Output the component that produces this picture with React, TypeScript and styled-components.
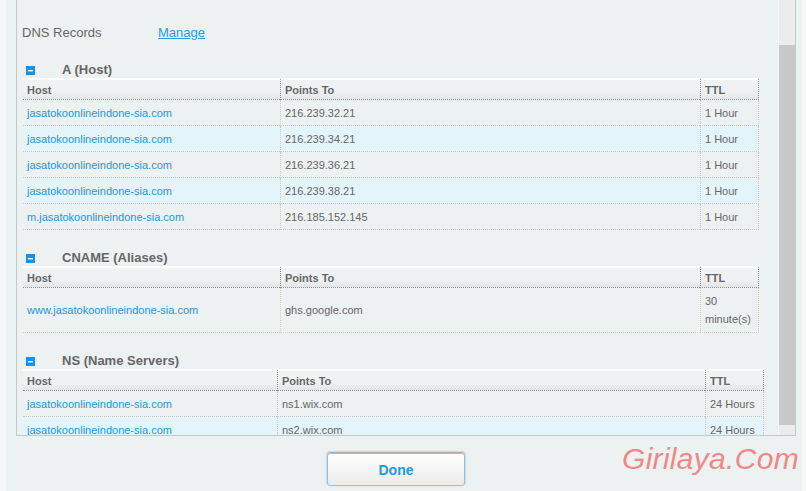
import React from "react";
import styled, { createGlobalStyle } from "styled-components";

const Global = createGlobalStyle`
  html, body { margin: 0; padding: 0; background: #f6f8f8; }
  body { font-family: "Liberation Sans", Arial, sans-serif; }
  * { box-sizing: border-box; }
`;

const Panel = styled.div`
  margin-left: 6px;
  width: 796px;
  height: 491px;
  background: #ecf1f1;
  padding-left: 10px;
  display: flex;
  flex-direction: column;
  overflow: hidden;
`;

const ScrollBox = styled.div`
  width: 780px;
  height: 436px;
  border: 1px solid #c4c8c8;
  border-top: none;
  display: flex;
`;

const Content = styled.div`
  flex: 1;
  padding: 24px 0 0 0;
  overflow: hidden;
`;

const ScrollBar = styled.div`
  width: 17px;
  border-left: 1px solid #f6f6f6;
  background: #ececec;
  padding: 45px 0 10px;
  display: flex;
`;

const Thumb = styled.div`
  flex: 1;
  background: #c8c8c8;
`;

const TitleRow = styled.div`
  display: flex;
  align-items: center;
  height: 16px;
  padding-left: 5px;
  font-size: 13px;
  color: #666;
`;

const Title = styled.span`
  width: 136px;
`;

const ManageLink = styled.a`
  color: #1f9ee6;
  text-decoration: underline;
  cursor: pointer;
`;

const Section = styled.div<{ $top: number }>`
  margin-top: ${(p) => p.$top}px;
`;

const SectionHead = styled.div`
  display: flex;
  align-items: center;
  height: 18px;
  padding-left: 9px;
  font-size: 13px;
  font-weight: bold;
  color: #666;
`;

const Toggle = styled.svg`
  width: 9px;
  height: 9px;
  margin-top: 2px;
  margin-right: 27px;
  flex: none;
`;

const Table = styled.div<{ $cols: string }>`
  margin-left: 6px;
  display: grid;
  grid-template-columns: ${(p) => p.$cols};
  font-size: 11px;
`;

const HeadCell = styled.div<{ $sep?: boolean; $end?: boolean }>`
  height: 22px;
  border-top: 2px solid #fff;
  border-bottom: 1px dotted #8a8a8a;
  border-left: ${(p) => (p.$sep ? "1px dotted #8a8a8a" : "none")};
  border-right: ${(p) => (p.$end ? "1px dotted #8a8a8a" : "none")};
  background: linear-gradient(#eef2f2 0%, #eef2f2 65%, #e1e5e5 100%);
  padding-left: 4px;
  display: flex;
  align-items: center;
  font-weight: bold;
  color: #666;
`;

const Cell = styled.div<{ $alt?: boolean; $sep?: boolean; $end?: boolean; $tall?: boolean; $tan?: boolean }>`
  min-height: ${(p) => (p.$tall ? 45 : 26)}px;
  border-bottom: 1px dotted ${(p) => (p.$tan ? "#d8ccb2" : "#c9c9c9")};
  border-left: ${(p) => (p.$sep ? `1px dotted ${p.$tan ? "#d8ccb2" : "#c9c9c9"}` : "none")};
  border-right: ${(p) => (p.$end ? `1px dotted ${p.$tan ? "#d8ccb2" : "#c9c9c9"}` : "none")};
  background: ${(p) => (p.$alt ? "#e3f4fb" : "transparent")};
  padding: 0 4px;
  display: flex;
  align-items: center;
  color: #666;
  line-height: 18px;
`;

const HostLink = styled.a`
  color: #1f97dc;
  text-decoration: none;
`;

const Footer = styled.div`
  flex: 1;
  display: flex;
  align-items: flex-start;
  padding-left: 311px;
`;

const DoneButton = styled.button`
  margin-top: 17px;
  width: 138px;
  height: 33px;
  border: 1px solid #8cc6ea;
  border-radius: 3px;
  background: linear-gradient(#ffffff, #ebebeb);
  box-shadow: 0 -1px 2px #9a9a9a;
  font-family: "Liberation Sans", Arial, sans-serif;
  font-size: 14px;
  font-weight: bold;
  color: #1b9be4;
  cursor: pointer;
`;

const Watermark = styled.div`
  margin-left: 157px;
  margin-top: 6px;
  font-family: "Liberation Sans", Arial, sans-serif;
  font-style: italic;
  font-size: 30px;
  line-height: 34px;
  color: #f08888;
  letter-spacing: 0.3px;
`;

const MinusIcon = () => (
  <Toggle viewBox="0 0 9 9">
    <rect width="9" height="9" fill="#1591ee" />
    <rect x="2" y="4" width="5" height="1.4" fill="#fff" />
  </Toggle>
);

type Rec = { host: string; points: string; ttl: string };

const aRecords: Rec[] = [
  { host: "jasatokoonlineindone-sia.com", points: "216.239.32.21", ttl: "1 Hour" },
  { host: "jasatokoonlineindone-sia.com", points: "216.239.34.21", ttl: "1 Hour" },
  { host: "jasatokoonlineindone-sia.com", points: "216.239.36.21", ttl: "1 Hour" },
  { host: "jasatokoonlineindone-sia.com", points: "216.239.38.21", ttl: "1 Hour" },
  { host: "m.jasatokoonlineindone-sia.com", points: "216.185.152.145", ttl: "1 Hour" },
];

const cnameRecords: Rec[] = [
  { host: "www.jasatokoonlineindone-sia.com", points: "ghs.google.com", ttl: "30 minute(s)" },
];

const nsRecords: Rec[] = [
  { host: "jasatokoonlineindone-sia.com", points: "ns1.wix.com", ttl: "24 Hours" },
  { host: "jasatokoonlineindone-sia.com", points: "ns2.wix.com", ttl: "24 Hours" },
];

const RecordTable = ({ cols, rows, tall, tan }: { cols: string; rows: Rec[]; tall?: boolean; tan?: boolean }) => (
  <Table $cols={cols}>
    <HeadCell>Host</HeadCell>
    <HeadCell $sep>Points To</HeadCell>
    <HeadCell $sep $end>TTL</HeadCell>
    {rows.map((r, i) => {
      const alt = i % 2 === 1;
      return (
        <React.Fragment key={i}>
          <Cell $alt={alt} $tall={tall} $tan={tan}>
            <HostLink href="#">{r.host}</HostLink>
          </Cell>
          <Cell $alt={alt} $sep $tall={tall} $tan={tan}>{r.points}</Cell>
          <Cell $alt={alt} $sep $end $tall={tall} $tan={tan}>{r.ttl}</Cell>
        </React.Fragment>
      );
    })}
  </Table>
);

export default function App() {
  return (
    <>
      <Global />
      <Panel>
        <ScrollBox>
          <Content>
            <TitleRow>
              <Title>DNS Records</Title>
              <ManageLink href="#">Manage</ManageLink>
            </TitleRow>
            <Section $top={20}>
              <SectionHead>
                <MinusIcon />A (Host)
              </SectionHead>
              <RecordTable cols="257px 420px 59px" rows={aRecords} />
            </Section>
            <Section $top={18}>
              <SectionHead>
                <MinusIcon />CNAME (Aliases)
              </SectionHead>
              <RecordTable cols="257px 420px 59px" rows={cnameRecords} tall tan />
            </Section>
            <Section $top={18}>
              <SectionHead>
                <MinusIcon />NS (Name Servers)
              </SectionHead>
              <RecordTable cols="254px 428px 59px" rows={nsRecords} />
            </Section>
          </Content>
          <ScrollBar>
            <Thumb />
          </ScrollBar>
        </ScrollBox>
        <Footer>
          <DoneButton>Done</DoneButton>
          <Watermark>Girilaya.Com</Watermark>
        </Footer>
      </Panel>
    </>
  );
}
